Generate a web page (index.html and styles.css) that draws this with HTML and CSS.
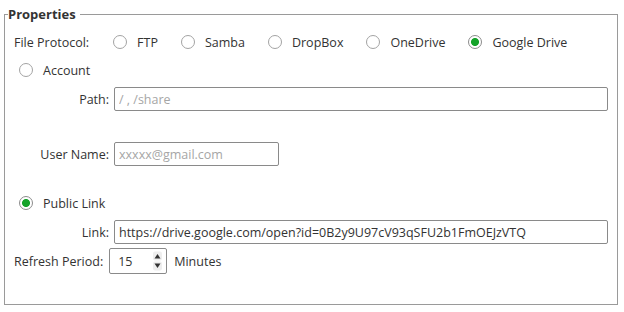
FILE: index.html
```html
<!DOCTYPE html>
<html>
<head>
    <link rel="stylesheet" href="styles.css">
</head>
<body>
    <fieldset class="props">
        <legend>Properties</legend>

        <div class="row protocol-row">
            <span class="row-title">File Protocol:</span>
            <label class="radio"><input type="radio" name="proto"> FTP</label>
            <label class="radio"><input type="radio" name="proto"> Samba</label>
            <label class="radio"><input type="radio" name="proto"> DropBox</label>
            <label class="radio"><input type="radio" name="proto"> OneDrive</label>
            <label class="radio"><input type="radio" name="proto" checked> Google Drive</label>
        </div>

        <div class="row mode-row account-row">
            <label class="radio"><input type="radio" name="mode"> Account</label>
        </div>

        <div class="row field-row path-row">
            <label class="field-label" for="path">Path:</label>
            <input type="text" id="path" class="text-input wide" placeholder="/ , /share">
        </div>

        <div class="row field-row user-row">
            <label class="field-label" for="user">User Name:</label>
            <input type="text" id="user" class="text-input short" placeholder="xxxxx@gmail.com">
        </div>

        <div class="row mode-row public-row">
            <label class="radio"><input type="radio" name="mode" checked> Public Link</label>
        </div>

        <div class="row field-row link-row">
            <label class="field-label" for="link">Link:</label>
            <input type="text" id="link" class="text-input wide" value="https://drive.google.com/open?id=0B2y9U97cV93qSFU2b1FmOEJzVTQ">
        </div>

        <div class="row refresh-row">
            <span class="row-title">Refresh Period:</span>
            <div class="spinner">
                <span class="spinner-value">15</span>
                <svg class="spinner-arrows" width="9" height="20" viewBox="0 0 9 20">
                    <rect x="0" y="0.5" width="9" height="9" rx="2" fill="#eeeeee"/>
                    <rect x="0" y="10.5" width="9" height="9" rx="2" fill="#eeeeee"/>
                    <path d="M1.5 7.5 L4.5 3 L7.5 7.5 Z" fill="#333"/>
                    <path d="M1.5 12.5 L4.5 17 L7.5 12.5 Z" fill="#333"/>
                </svg>
            </div>
            <span class="unit">Minutes</span>
        </div>
    </fieldset>
</body>
</html>
```

FILE: styles.css
```css
body {
    margin: 0;
    font-family: "Open Sans", "Noto Sans", Arial, sans-serif;
    font-size: 12.5px;
    color: #333;
    background: #fff;
}
.props {
    margin: 6px 6px 0 4px;
    padding: 0 9px;
    height: 299px;
    border: 1px solid #9a9a9a;
    box-sizing: border-box;
}
.props legend {
    margin-left: -6px;
    padding: 0 4px 0 0;
    font-size: 13px;
    font-weight: bold;
    line-height: 16px;
    color: #333;
}
.row {
    display: flex;
    align-items: center;
    height: 24px;
}
.protocol-row {
    margin-top: 8px;
}
.protocol-row .row-title {
    margin-right: 24px;
}
.protocol-row .radio {
    margin-right: 23px;
}
.account-row {
    margin-top: 4px;
}
.path-row {
    margin-top: 5px;
}
.user-row {
    margin-top: 31px;
}
.public-row {
    margin-top: 25px;
}
.link-row {
    margin-top: 5px;
}
.refresh-row {
    margin-top: 4px;
    height: 26px;
}
.mode-row .radio {
    margin-left: 5px;
}
.radio {
    display: flex;
    align-items: center;
    white-space: nowrap;
}
.radio input {
    appearance: none;
    -webkit-appearance: none;
    width: 14px;
    height: 14px;
    margin: 0 10px 0 0;
    border: 1px solid #a3a3a3;
    border-radius: 50%;
    background: #fff;
    box-sizing: border-box;
}
.radio input:checked {
    border-color: #8c8c8c;
    background: radial-gradient(circle, #15a32a 0, #15a32a 3.6px, #fff 4.4px);
}
.field-label {
    width: 95px;
    margin-right: 5px;
    text-align: right;
}
.text-input {
    height: 24px;
    padding: 0 4px;
    border: 1px solid #8a8a8a;
    border-radius: 2px;
    box-sizing: border-box;
    font-family: inherit;
    font-size: 12.5px;
    color: #333;
}
.text-input::placeholder {
    color: #a6a6a6;
}
.wide {
    width: 494px;
}
.short {
    width: 165px;
}
.refresh-row .row-title {
    margin-right: 6px;
}
.spinner {
    display: flex;
    align-items: center;
    justify-content: space-between;
    width: 58px;
    height: 26px;
    padding: 0 4px 0 8px;
    border: 1px solid #8a8a8a;
    border-radius: 2px;
    box-sizing: border-box;
}
.spinner-arrows {
    display: block;
}
.unit {
    margin-left: 7px;
}
```
